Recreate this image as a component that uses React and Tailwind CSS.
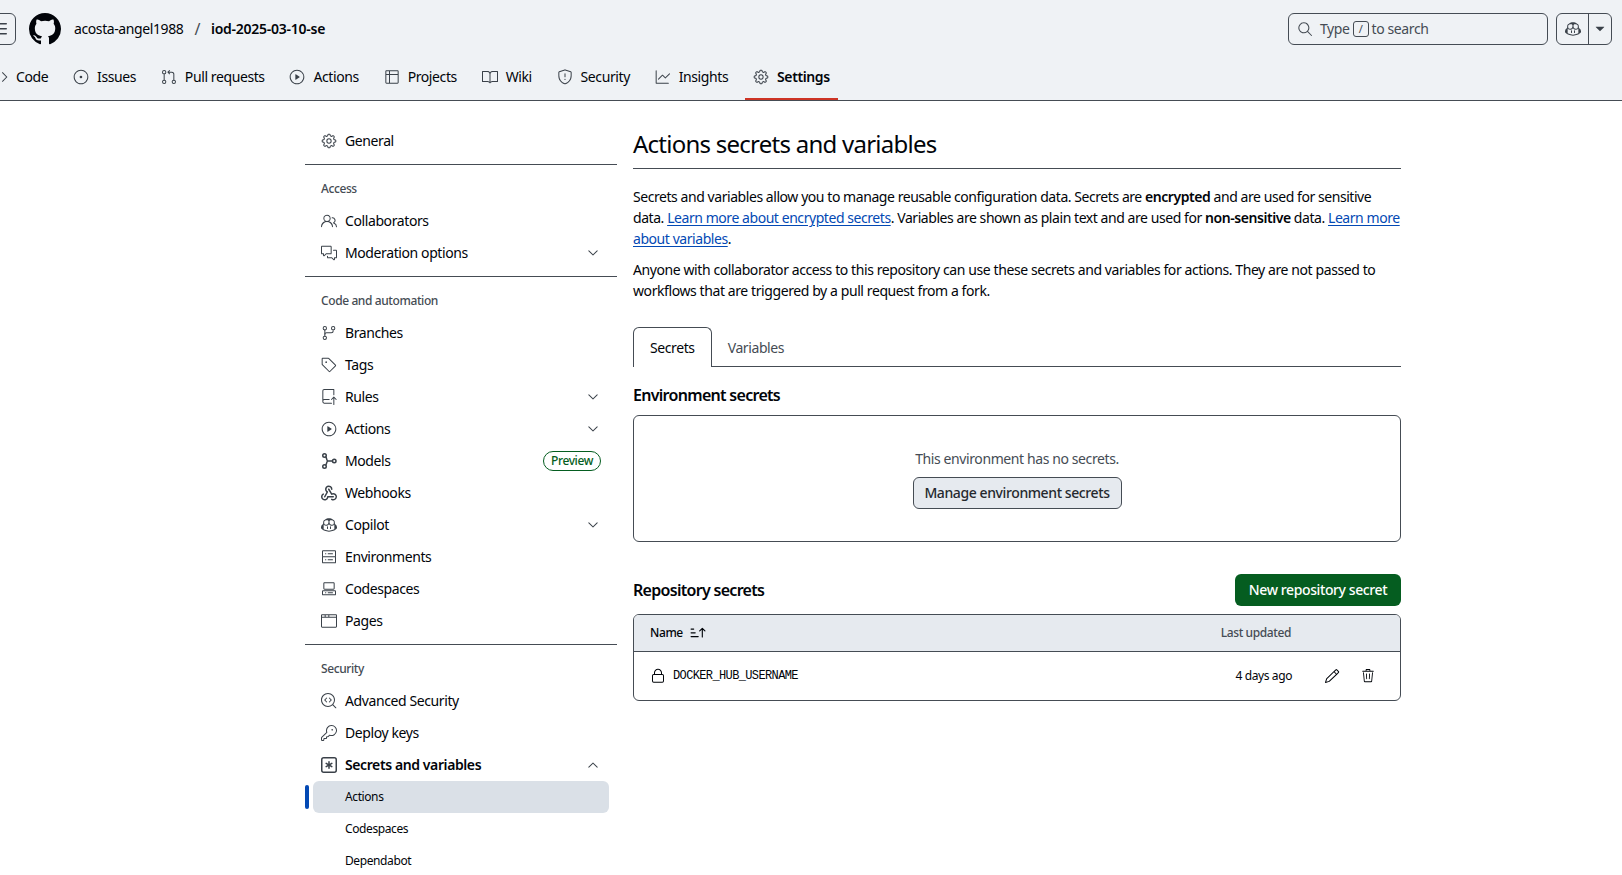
import {
  GoBook,
  GoBrowser,
  GoChevronDown,
  GoChevronUp,
  GoCode,
  GoCodescan,
  GoCodespaces,
  GoCommentDiscussion,
  GoCopilot,
  GoGear,
  GoGitBranch,
  GoGitPullRequest,
  GoGraph,
  GoIssueOpened,
  GoKey,
  GoLock,
  GoPencil,
  GoPeople,
  GoPlay,
  GoRepoPush,
  GoSearch,
  GoServer,
  GoShield,
  GoSortAsc,
  GoTable,
  GoTag,
  GoTrash,
  GoTriangleDown,
} from "react-icons/go";

function Octicon({ size = 16, className, paths }) {
  return (
    <svg width={size} height={size} viewBox="0 0 16 16" fill="currentColor" className={className}>
      {paths.map((d) => (
        <path key={d} d={d} />
      ))}
    </svg>
  );
}

const GithubMark = (props) => (
  <Octicon
    {...props}
    paths={[
      "M8 0c4.42 0 8 3.58 8 8a8.013 8.013 0 0 1-5.45 7.59c-.4.08-.55-.17-.55-.38 0-.27.01-1.13.01-2.2 0-.75-.25-1.23-.54-1.48 1.78-.2 3.65-.88 3.65-3.95 0-.88-.31-1.59-.82-2.15.08-.2.36-1.02-.08-2.12 0 0-.67-.22-2.2.82-.64-.18-1.32-.27-2-.27-.68 0-1.36.09-2 .27-1.53-1.03-2.2-.82-2.2-.82-.44 1.1-.16 1.92-.08 2.12-.51.56-.82 1.28-.82 2.15 0 3.06 1.86 3.75 3.64 3.95-.23.2-.44.55-.51 1.07-.46.21-1.61.55-2.33-.66-.15-.24-.6-.83-1.23-.82-.67.01-.27.38.01.53.34.19.73.9.82 1.13.16.45.68 1.31 2.69.94 0 .67.01 1.3.01 1.49 0 .21-.15.45-.55.38A7.995 7.995 0 0 1 0 8c0-4.42 3.58-8 8-8Z",
    ]}
  />
);

const ThreeBars = (props) => (
  <Octicon
    {...props}
    paths={["M1 2.75A.75.75 0 0 1 1.75 2h12.5a.75.75 0 0 1 0 1.5H1.75A.75.75 0 0 1 1 2.75Zm0 5A.75.75 0 0 1 1.75 7h12.5a.75.75 0 0 1 0 1.5H1.75A.75.75 0 0 1 1 7.75ZM1.75 12h12.5a.75.75 0 0 1 0 1.5H1.75a.75.75 0 0 1 0-1.5Z"]}
  />
);

const Webhook = (props) => (
  <Octicon
    {...props}
    paths={[
      "M5.5 4.25a2.25 2.25 0 0 1 4.5 0 .75.75 0 0 0 1.5 0 3.75 3.75 0 1 0-6.14 2.889l-2.272 4.258a.75.75 0 0 0 1.324.706L7 7.25a.75.75 0 0 0-.309-1.015A2.25 2.25 0 0 1 5.5 4.25Z",
      "M7.364 3.607a.75.75 0 0 1 1.03.257l2.608 4.349a3.75 3.75 0 1 1-.628 6.785.75.75 0 0 1 .752-1.299 2.25 2.25 0 1 0-.033-3.88.75.75 0 0 1-1.03-.256L7.107 4.636a.75.75 0 0 1 .257-1.03Z",
      "M2.9 8.776A.75.75 0 0 1 2.625 9.8 2.25 2.25 0 1 0 6 11.75a.75.75 0 0 1 .75-.751h5.5a.75.75 0 0 1 0 1.5H7.425a3.751 3.751 0 1 1-5.55-3.998.75.75 0 0 1 1.024.274Z",
    ]}
  />
);

const KeyAsterisk = (props) => (
  <Octicon
    {...props}
    paths={[
      "M0 2.75A2.75 2.75 0 0 1 2.75 0h10.5A2.75 2.75 0 0 1 16 2.75v10.5A2.75 2.75 0 0 1 13.25 16H2.75A2.75 2.75 0 0 1 0 13.25ZM2.75 1.5c-.69 0-1.25.56-1.25 1.25v10.5c0 .69.56 1.25 1.25 1.25h10.5c.69 0 1.25-.56 1.25-1.25V2.75c0-.69-.56-1.25-1.25-1.25Z",
      "M8 4a.75.75 0 0 1 .75.75V6.7l1.69-.975a.75.75 0 0 1 .75 1.3L9.5 8l1.69.976a.75.75 0 0 1-.75 1.298L8.75 9.3v1.951a.75.75 0 0 1-1.5 0V9.299l-1.69.976a.75.75 0 0 1-.75-1.3L6.5 8l-1.69-.975a.75.75 0 0 1 .75-1.3l1.69.976V4.75A.75.75 0 0 1 8 4Z",
    ]}
  />
);

const AiModel = ({ size = 16, className }) => (
  <svg width={size} height={size} viewBox="0 0 16 16" fill="none" stroke="currentColor" strokeWidth="1.5" className={className}>
    <circle cx="3.5" cy="2.5" r="1.75" />
    <circle cx="3.5" cy="13.5" r="1.75" />
    <circle cx="13.25" cy="8" r="1.75" />
    <path d="M4.6 3.9C6.2 5.3 5.4 8 7 8H11.5M7 8C5.4 8 6.2 10.7 4.6 12.1" />
  </svg>
);

const repoTabs = [
  { label: "Code", icon: GoCode },
  { label: "Issues", icon: GoIssueOpened },
  { label: "Pull requests", icon: GoGitPullRequest },
  { label: "Actions", icon: GoPlay },
  { label: "Projects", icon: GoTable },
  { label: "Wiki", icon: GoBook },
  { label: "Security", icon: GoShield },
  { label: "Insights", icon: GoGraph },
  { label: "Settings", icon: GoGear, active: true },
];

const sideGroups = [
  {
    items: [{ label: "General", icon: GoGear }],
  },
  {
    title: "Access",
    items: [
      { label: "Collaborators", icon: GoPeople },
      { label: "Moderation options", icon: GoCommentDiscussion, caret: true },
    ],
  },
  {
    title: "Code and automation",
    items: [
      { label: "Branches", icon: GoGitBranch },
      { label: "Tags", icon: GoTag },
      { label: "Rules", icon: GoRepoPush, caret: true },
      { label: "Actions", icon: GoPlay, caret: true },
      { label: "Models", icon: AiModel, preview: true },
      { label: "Webhooks", icon: Webhook },
      { label: "Copilot", icon: GoCopilot, caret: true },
      { label: "Environments", icon: GoServer },
      { label: "Codespaces", icon: GoCodespaces },
      { label: "Pages", icon: GoBrowser },
    ],
  },
];

function SideItem({ item }) {
  const Icon = item.icon;
  return (
    <div className="mx-2 flex h-8 items-center gap-2 px-2">
      <Icon size={16} className="shrink-0 text-[#3a4149]" />
      <span className="flex-1">{item.label}</span>
      {item.caret ? <GoChevronDown size={16} className="text-[#3a4149]" /> : null}
      {item.preview ? (
        <span className="flex h-5 items-center rounded-full border border-[#055d20] px-[7px] text-xs font-medium text-[#055d20]">Preview</span>
      ) : null}
    </div>
  );
}

function Sidebar() {
  return (
    <aside className="w-[312px] shrink-0 pt-6">
      {sideGroups.map((group, index) => (
        <div key={index} className="mb-2 border-b border-[#454c54] pb-[7px]">
          {group.title ? <div className="mx-2 flex h-8 items-center px-2 text-xs font-medium text-[#454c54]">{group.title}</div> : null}
          {group.items.map((item) => (
            <SideItem key={item.label} item={item} />
          ))}
        </div>
      ))}
      <div className="mx-2 flex h-8 items-center px-2 text-xs font-medium text-[#454c54]">Security</div>
      <SideItem item={{ label: "Advanced Security", icon: GoCodescan }} />
      <SideItem item={{ label: "Deploy keys", icon: GoKey }} />
      <div className="mx-2 flex h-8 items-center gap-2 px-2 font-semibold">
        <KeyAsterisk size={16} className="shrink-0 text-[#3a4149]" />
        <span className="flex-1">Secrets and variables</span>
        <GoChevronUp size={16} className="text-[#3a4149]" />
      </div>
      <div className="relative mx-2 flex h-8 items-center rounded-md bg-[#dae0e7] pl-8 text-xs">
        Actions
        <span className="absolute top-1 -left-2 h-6 w-1 rounded-md bg-[#0349b4]" />
      </div>
      <div className="mx-2 flex h-8 items-center pl-8 text-xs">Codespaces</div>
      <div className="mx-2 flex h-8 items-center pl-8 text-xs">Dependabot</div>
    </aside>
  );
}

function Header() {
  return (
    <header className="h-[101px] border-b border-[#454c54] bg-[#eff2f5]">
      <div className="flex h-[58px] items-center pr-[10px]">
        <button className="-ml-4 flex h-8 w-8 shrink-0 items-center justify-center rounded-md border border-[#454c54]">
          <ThreeBars size={16} className="text-[#3a4149]" />
        </button>
        <GithubMark size={32} className="ml-[13px]" />
        <span className="ml-[13px]">acosta-angel1988</span>
        <span className="mx-[11px] text-base text-[#454c54]">/</span>
        <span className="font-semibold tracking-[-0.25px]">iod-2025-03-10-se</span>
        <div className="ml-auto flex h-8 w-[260px] items-center rounded-md border border-[#454c54] pl-2 text-[#454c54]">
          <GoSearch size={16} />
          <span className="ml-[7px]">Type</span>
          <span className="mx-[3px] flex h-4 w-4 items-center justify-center rounded-[3px] border border-[#454c54] text-[11px]">/</span>
          <span>to search</span>
        </div>
        <div className="ml-2 flex h-8 w-14 rounded-md border border-[#454c54]">
          <div className="flex w-8 items-center justify-center border-r border-[#454c54]">
            <GoCopilot size={16} className="text-[#3a4149]" />
          </div>
          <div className="flex flex-1 items-center justify-center">
            <GoTriangleDown size={16} className="text-[#3a4149]" />
          </div>
        </div>
      </div>
      <nav className="-ml-4 flex gap-[8.8px]">
        {repoTabs.map((tab) => {
          const Icon = tab.icon;
          return (
            <div key={tab.label} className={`relative flex h-[38px] items-center gap-2 px-2 ${tab.active ? "font-semibold" : ""}`}>
              <Icon size={16} className="text-[#3a4149]" />
              {tab.label}
              {tab.active ? <span className="absolute right-0 -bottom-[4px] left-0 h-[2px] bg-[#cd3425]" /> : null}
            </div>
          );
        })}
      </nav>
    </header>
  );
}

function Content() {
  return (
    <main className="ml-4 w-[768px] shrink-0 pt-[25px]">
      <h1 className="border-b border-[#454c54] pb-[6px] text-2xl leading-9 tracking-[-0.75px]">Actions secrets and variables</h1>
      <p className="mt-[17px] leading-[21px] tracking-[-0.44px] whitespace-nowrap">
        Secrets and variables allow you to manage reusable configuration data. Secrets are <b className="font-semibold">encrypted</b> and are used for sensitive
        <br />
        data. <a className="text-[#0349b4] underline underline-offset-2">Learn more about encrypted secrets</a>. Variables are shown as plain text and are used for <b className="font-semibold">non-sensitive</b> data. <a className="text-[#0349b4] underline underline-offset-2">Learn more</a>
        <br />
        <a className="text-[#0349b4] underline underline-offset-2">about variables</a>.
      </p>
      <p className="mt-[10px] leading-[21px] tracking-[-0.41px] whitespace-nowrap">
        Anyone with collaborator access to this repository can use these secrets and variables for actions. They are not passed to
        <br />
        workflows that are triggered by a pull request from a fork.
      </p>

      <div className="mt-[26px] flex h-10 border-b border-[#454c54]">
        <div className="flex h-10 items-center rounded-t-md border border-b-0 border-[#454c54] bg-white px-4">Secrets</div>
        <div className="flex h-10 items-center px-4 pt-px text-[#454c54]">Variables</div>
      </div>

      <h2 className="mt-4 text-base leading-6 font-semibold tracking-[-0.7px]">Environment secrets</h2>
      <div className="mt-2 flex h-[127px] flex-col items-center justify-center rounded-md border border-[#454c54]">
        <p className="leading-[21px] text-[#454c54]">This environment has no secrets.</p>
        <button className="mt-2 flex h-8 w-[209px] items-center justify-center rounded-md border border-[#454c54] bg-[#e6eaef] font-medium text-[#25292e]">Manage environment secrets</button>
      </div>

      <div className="mt-8 flex items-center justify-between">
        <h2 className="text-base leading-6 font-semibold tracking-[-0.7px]">Repository secrets</h2>
        <button className="flex h-8 w-[166px] items-center justify-center rounded-md bg-[#055d20] font-medium text-white">New repository secret</button>
      </div>

      <div className="mt-2 overflow-hidden rounded-md border border-[#454c54] text-xs">
        <div className="flex h-[37px] items-center border-b border-[#454c54] bg-[#e6eaef] px-4">
          <span className="font-medium">Name</span>
          <GoSortAsc size={18} className="ml-[6px]" />
          <span className="mr-[93px] ml-auto font-medium text-[#454c54]">Last updated</span>
        </div>
        <div className="flex h-[48px] items-center px-4">
          <GoLock size={16} className="mr-[7px]" />
          <span className="font-['Liberation_Mono',monospace] text-[12px] tracking-[-0.63px]">DOCKER_HUB_USERNAME</span>
          <span className="ml-auto">4 days ago</span>
          <GoPencil size={16} className="ml-8" />
          <GoTrash size={14} className="mr-[9px] ml-[21px]" />
        </div>
      </div>
    </main>
  );
}

export default function App() {
  return (
    <div className="h-[875px] overflow-hidden bg-white font-['Noto_Sans',sans-serif] text-sm tracking-[-0.4px] text-[#010409]">
      <Header />
      <div className="ml-[305px] flex">
        <Sidebar />
        <Content />
      </div>
    </div>
  );
}
